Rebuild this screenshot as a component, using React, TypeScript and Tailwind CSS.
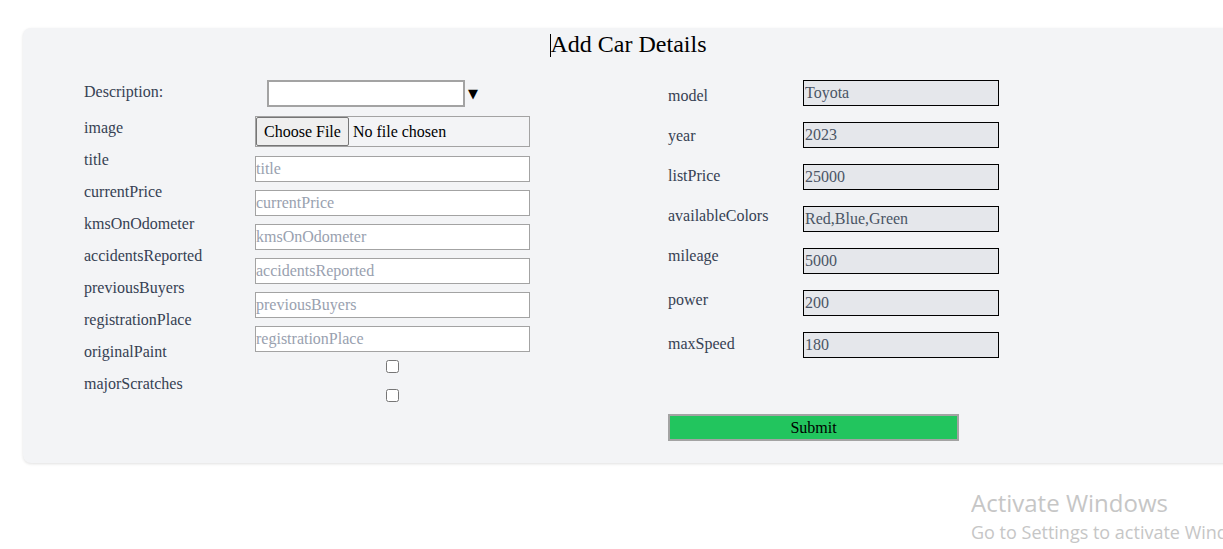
import React from "react";

const leftLabels = [
  "image",
  "title",
  "currentPrice",
  "kmsOnOdometer",
  "accidentsReported",
  "previousBuyers",
  "registrationPlace",
  "originalPaint",
  "majorScratches",
];

const leftInputs = [
  "title",
  "currentPrice",
  "kmsOnOdometer",
  "accidentsReported",
  "previousBuyers",
  "registrationPlace",
];

const rightFields = [
  { label: "model", value: "Toyota", h: "h-[40px]" },
  { label: "year", value: "2023", h: "h-[40px]" },
  { label: "listPrice", value: "25000", h: "h-[40px]" },
  { label: "availableColors", value: "Red,Blue,Green", h: "h-[40px]" },
  { label: "mileage", value: "5000", h: "h-[44px]" },
  { label: "power", value: "200", h: "h-[44px]" },
  { label: "maxSpeed", value: "180", h: "h-[20px]" },
];

export default function App() {
  return (
    <div className="relative h-[549px] w-full overflow-hidden bg-white font-['Liberation_Serif',serif] text-[16px]">
      <div className="pl-[23px] pt-[28px]">
        <div className="w-[1210px] rounded-lg bg-gray-100 pb-[22px] pt-[2px] shadow-[0_1px_3px_rgba(0,0,0,0.12)]">
          <h1 className="text-center text-[24px] leading-[28px] text-black">
            <span className="inline-block h-[23px] w-px bg-black align-[-5px]" />
            Add Car Details
          </h1>
          <div className="mt-[22px] flex pl-[61px]">
            {/* Left section */}
            <div className="flex">
              <div className="flex w-[171px] flex-col pt-[2px] leading-[20px] text-gray-700">
                <div className="h-[36px]">Description:</div>
                {leftLabels.map((l) => (
                  <div key={l} className="h-[32px]">
                    {l}
                  </div>
                ))}
              </div>
              <div className="flex w-[275px] flex-col">
                <div className="ml-[12px] flex h-[27px] items-center">
                  <div className="h-[27px] w-[198px] border-2 border-[#a3a3a3] bg-white" />
                  <span className="ml-[3px] font-['DejaVu_Sans',sans-serif] text-[13px] leading-none text-black">
                    ▼
                  </span>
                </div>
                <div className="mt-[9px] flex h-[31px] items-center border border-[#a3a3a3]">
                  <span className="flex h-[29px] items-center rounded-[2px] border border-[#767676] bg-[#efefef] px-[7px] text-black">
                    Choose File
                  </span>
                  <span className="ml-[4px] text-black">No file chosen</span>
                </div>
                <div className="mt-[9px] flex flex-col gap-[8px]">
                  {leftInputs.map((p) => (
                    <input
                      key={p}
                      placeholder={p}
                      className="h-[26px] w-[275px] border border-[#a3a3a3] bg-white px-0 text-[16px] text-gray-700 outline-none placeholder:text-gray-400"
                    />
                  ))}
                </div>
                <div className="mt-[8px] flex flex-col items-center">
                  <input type="checkbox" className="m-0 h-[13px] w-[13px]" />
                  <input type="checkbox" className="m-0 mt-[16px] h-[13px] w-[13px]" />
                </div>
              </div>
            </div>

            {/* Right section */}
            <div className="ml-[138px] flex flex-col">
              <div className="flex">
                <div className="flex w-[135px] flex-col pt-[6px] leading-[20px] text-gray-700">
                  {rightFields.map((f) => (
                    <div key={f.label} className={f.h}>
                      {f.label}
                    </div>
                  ))}
                </div>
                <div className="flex flex-col gap-[16px]">
                  {rightFields.map((f) => (
                    <input
                      key={f.label}
                      defaultValue={f.value}
                      className="h-[26px] w-[196px] border border-black bg-gray-200 pl-[1px] text-[16px] text-gray-600 outline-none"
                    />
                  ))}
                </div>
              </div>
              <button className="mt-[56px] h-[27px] w-[291px] border-2 border-[#a3a3a3] bg-[#22c55e] text-[16px] leading-none text-black">
                Submit
              </button>
            </div>
          </div>
        </div>
      </div>

      <div className="pointer-events-none absolute left-[971px] top-[487px] w-[252px] overflow-hidden whitespace-nowrap font-['Open_Sans',sans-serif] text-[#c6c6c6]">
        <div className="text-[24px] leading-[32px]">Activate Windows</div>
        <div className="text-[18px] leading-[26px]">Go to Settings to activate Windows.</div>
      </div>
    </div>
  );
}
